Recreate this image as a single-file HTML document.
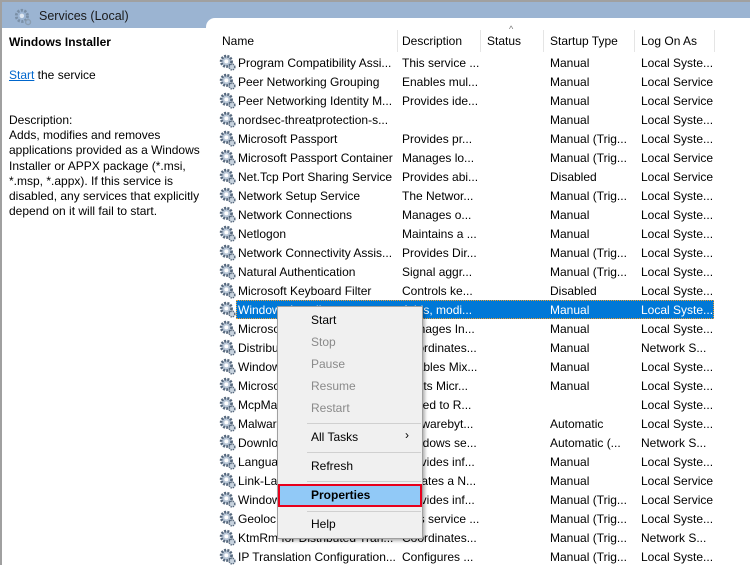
<!DOCTYPE html>
<html><head><style>
*{margin:0;padding:0;box-sizing:border-box}
body{width:750px;height:565px;overflow:hidden;background:#fff;font-family:"Liberation Sans",sans-serif;font-size:12px;color:#000;position:relative}
.abs{position:absolute;white-space:nowrap}
#top{position:absolute;left:0;top:0;width:750px;height:2px;background:#a0a0a0}
#band{position:absolute;left:0;top:2px;width:750px;height:26px;background:#9bb4d2}
#lb{position:absolute;left:0;top:0;width:2px;height:565px;background:#a0a0a0}
#right{position:absolute;left:206px;top:18px;width:544px;height:547px;background:#fff;border-top-left-radius:9px}
#left{position:absolute;left:2px;top:28px;width:204px;height:537px;background:#fff}
.sep{position:absolute;top:30px;width:1px;height:22px;background:#e5e5e5}
.row{position:absolute;left:0;height:19px;width:750px}
.row span{position:absolute;top:3px;white-space:nowrap}
.gear{position:absolute;left:219px;top:1px;width:17px;height:17px}
#menu{position:absolute;left:277px;top:306px;width:146px;height:233px;background:#f0f0f0;border:1px solid #a0a0a0;box-shadow:2px 2px 3px rgba(0,0,0,.3)}
#menu div.i{position:absolute;left:33px;font-size:12px}
.dis{color:#8a8a8a}
.ms{position:absolute;left:29px;width:114px;height:1px;background:#d0d0d0}
</style></head><body>
<div id="band"></div><div id="top"></div><div id="lb"></div>
<div id="right"></div><div id="left"></div>
<svg class="abs" style="left:14px;top:8px" width="18" height="18" viewBox="0 0 16 16"><circle cx="7" cy="7" r="5" fill="none" stroke="#7a8fa6" stroke-width="2.5" stroke-dasharray="2 1.2"/><circle cx="7" cy="7" r="2" fill="#dfe8f2"/><circle cx="12.5" cy="12.5" r="2.2" fill="none" stroke="#8a9db0" stroke-width="1.2"/></svg>
<div class="abs" style="left:39px;top:9px;font-size:12.5px;color:#1a1a1a">Services (Local)</div>
<div class="abs" style="left:9px;top:35px;font-weight:bold;font-size:12px">Windows Installer</div>
<div class="abs" style="left:9px;top:68px"><span style="color:#0066cc;text-decoration:underline">Start</span> the service</div>
<div class="abs" style="left:9px;top:113px;line-height:15.2px;white-space:normal;width:200px">Description:<br>Adds, modifies and removes applications provided as a Windows Installer or APPX package (*.msi, *.msp, *.appx). If this service is disabled, any services that explicitly depend on it will fail to start.</div>
<div class="abs" style="left:222px;top:34px">Name</div>
<div class="abs" style="left:402px;top:34px">Description</div>
<div class="abs" style="left:487px;top:34px">Status</div>
<div class="abs" style="left:509px;top:24px;font-size:9px;color:#777">^</div>
<div class="abs" style="left:550px;top:34px">Startup Type</div>
<div class="abs" style="left:641px;top:34px">Log On As</div>
<div class="sep" style="left:397px"></div><div class="sep" style="left:480px"></div><div class="sep" style="left:543px"></div><div class="sep" style="left:634px"></div><div class="sep" style="left:714px"></div>
<svg width="0" height="0" style="position:absolute"><defs><symbol id="g" viewBox="0 0 15 15"><circle cx="6.5" cy="6.5" r="4.6" fill="#b8c6d6" stroke="#55677c" stroke-width="2.4" stroke-dasharray="1.7 1.1"/><circle cx="6.5" cy="6.5" r="1.8" fill="#fff"/><circle cx="11.5" cy="11.5" r="2.5" fill="#c8d3de" stroke="#55677c" stroke-width="1.3" stroke-dasharray="1.2 0.8"/></symbol></defs></svg>
<div id="rows"></div>
<script>
var d=[
["Program Compatibility Assi...","This service ...","Manual","Local Syste..."],
["Peer Networking Grouping","Enables mul...","Manual","Local Service"],
["Peer Networking Identity M...","Provides ide...","Manual","Local Service"],
["nordsec-threatprotection-s...","","Manual","Local Syste..."],
["Microsoft Passport","Provides pr...","Manual (Trig...","Local Syste..."],
["Microsoft Passport Container","Manages lo...","Manual (Trig...","Local Service"],
["Net.Tcp Port Sharing Service","Provides abi...","Disabled","Local Service"],
["Network Setup Service","The Networ...","Manual (Trig...","Local Syste..."],
["Network Connections","Manages o...","Manual","Local Syste..."],
["Netlogon","Maintains a ...","Manual","Local Syste..."],
["Network Connectivity Assis...","Provides Dir...","Manual (Trig...","Local Syste..."],
["Natural Authentication","Signal aggr...","Manual (Trig...","Local Syste..."],
["Microsoft Keyboard Filter","Controls ke...","Disabled","Local Syste..."],
["Windows Installer","Adds, modi...","Manual","Local Syste..."],
["Microsoft","Manages In...","Manual","Local Syste..."],
["Distributed","Coordinates...","Manual","Network S..."],
["Windows","Enables Mix...","Manual","Local Syste..."],
["Microsoft","Hosts Micr...","Manual","Local Syste..."],
["McpMa","Called to R...","","Local Syste..."],
["Malwar","Malwarebyt...","Automatic","Local Syste..."],
["Downlo","Windows se...","Automatic (...","Network S..."],
["Langua","Provides inf...","Manual","Local Syste..."],
["Link-La","Creates a N...","Manual","Local Service"],
["Window","Provides inf...","Manual (Trig...","Local Service"],
["Geoloc","This service ...","Manual (Trig...","Local Syste..."],
["KtmRm for Distributed Tran...","Coordinates...","Manual (Trig...","Network S..."],
["IP Translation Configuration...","Configures ...","Manual (Trig...","Local Syste..."]];
var h="";
d.forEach(function(r,i){var y=53+i*19;var sel=i==13;
h+='<div class="row" style="top:'+y+'px">'+(sel?'<div style="position:absolute;left:236px;top:0;width:478px;height:19px;background:#0078d7;outline:1px dotted #f0a030;outline-offset:-1px"></div>':'')+
'<svg class="gear"><use href="#g"/></svg><span style="left:238px;'+(sel?'color:#fff':'')+'">'+r[0]+'</span><span style="left:402px;'+(sel?'color:#fff':'')+'">'+r[1]+'</span><span style="left:550px;'+(sel?'color:#fff':'')+'">'+r[2]+'</span><span style="left:641px;'+(sel?'color:#fff':'')+'">'+r[3]+'</span></div>';});
document.getElementById("rows").innerHTML=h;
</script>
<div id="menu">
<div class="i" style="top:6px">Start</div>
<div class="i dis" style="top:28px">Stop</div>
<div class="i dis" style="top:50px">Pause</div>
<div class="i dis" style="top:72px">Resume</div>
<div class="i dis" style="top:94px">Restart</div>
<div class="ms" style="top:116px"></div>
<div class="i" style="top:123px">All Tasks</div>
<div class="abs" style="left:127px;top:121px;font-size:12px">›</div>
<div class="ms" style="top:145px"></div>
<div class="i" style="top:152px">Refresh</div>
<div class="ms" style="top:174px"></div>
<div style="position:absolute;left:0px;top:177px;width:144px;height:23px;background:#91c9f7;border:2px solid #e8001c"></div>
<div class="i" style="top:181px;font-weight:bold">Properties</div>
<div class="ms" style="top:204px"></div>
<div class="i" style="top:210px">Help</div>
</div>
</body></html>
